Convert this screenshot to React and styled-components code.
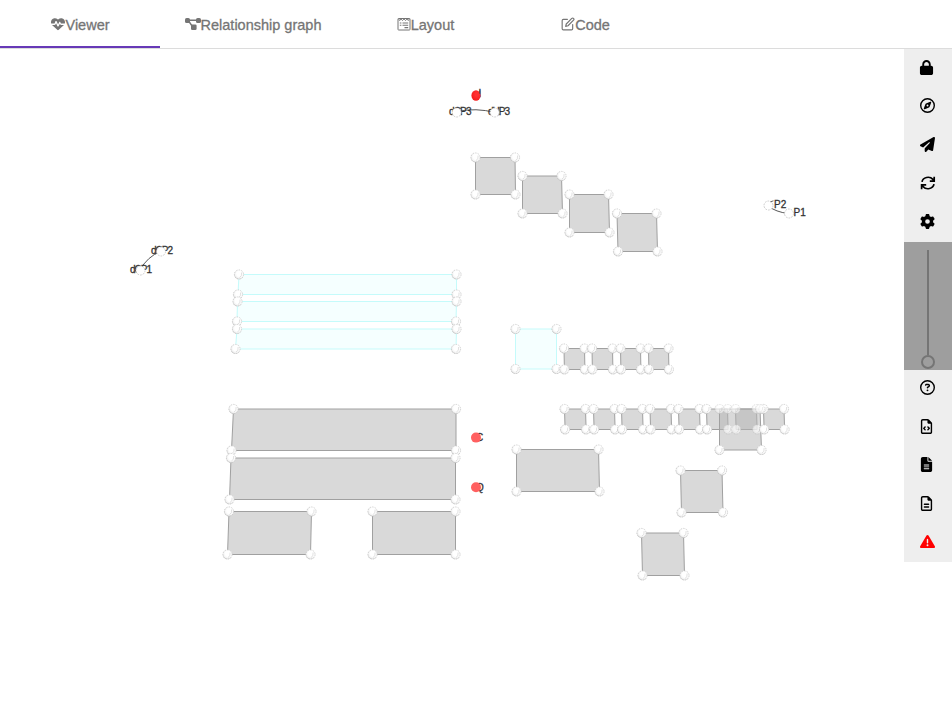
import React from "react";
import styled, { createGlobalStyle, css } from "styled-components";
import {
  FaHeartPulse, FaLock, FaRegCompass, FaPaperPlane, FaGear,
  FaRegCircleQuestion, FaRegFileCode, FaFileLines, FaRegFileLines, FaTriangleExclamation,
} from "react-icons/fa6";
import { FiEdit } from "react-icons/fi";

const GlobalStyle = createGlobalStyle`
  * { box-sizing: border-box; }
  body { margin: 0; background: #fff; overflow: hidden; }
`;

const Page = styled.div`
  display: flex;
  flex-direction: column;
  width: 952px;
  height: 720px;
  font-family: "Liberation Sans", Arial, sans-serif;
`;

const TabBar = styled.nav`
  display: flex;
  height: 49px;
  border-bottom: 1px solid #dcdcdc;
`;

const Tab = styled.button`
  display: flex;
  align-items: center;
  justify-content: center;
  width: ${(p) => p.$width}px;
  height: 48px;
  padding: 4px 0 0 1px;
  border: 0;
  border-bottom: 2px solid ${(p) => (p.$active ? "#673ab7" : "transparent")};
  background: none;
  color: #757575;
  font: 14.5px "Liberation Sans", Arial, sans-serif;
  -webkit-text-stroke: 0.3px #757575;
  white-space: nowrap;
`;

const TabIcon = styled.span`
  display: flex;
  margin-top: -3px;
  -webkit-text-stroke: 0;
`;

const Workspace = styled.main`
  display: flex;
  align-items: flex-start;
  flex: 1;
`;

const Scene = styled.svg`
  display: block;
  width: 904px;
  height: 671px;
`;

const Label = styled.text`
  font: 10px "Liberation Sans", Arial, sans-serif;
  fill: #333;
  stroke: #333;
  stroke-width: 0.3px;
`;

const Toolbar = styled.aside`
  display: flex;
  flex-direction: column;
  width: 48px;
  height: 513px;
  background: #eee;
`;

const ToolButton = styled.button`
  display: flex;
  flex: 1;
  align-items: center;
  justify-content: center;
  padding: 0 1px 2px 0;
  border: 0;
  background: none;
  color: #000;
  font-size: 15px;
  ${(p) => p.$alert && css`color: #f00;`}
  ${(p) => p.$narrow && css`padding-right: 4px;`}
  ${(p) => p.$lock && css`padding-right: 3px;`}
`;

const ZoomSlider = styled.div`
  display: flex;
  flex-direction: column;
  align-items: center;
  height: 128px;
  padding-top: 8px;
  background: #9e9e9e;
`;

const Track = styled.div`
  width: 2px;
  height: 105px;
  background: #757575;
`;

const Thumb = styled.div`
  width: 14px;
  height: 14px;
  border: 2px solid #757575;
  border-radius: 50%;
`;

const LayoutIcon = () => (
  <svg width="14" height="14" viewBox="0 0 14 14" fill="none" stroke="currentColor">
    <rect x="1" y="1.5" width="12" height="11.5" rx="0.6" />
    <path d="M1.5 1.7l1.2 1.9L4 1.9l1.5 1.7L7 1.9l1.5 1.7L10 1.9l1.3 1.7 1.2-1.9" strokeWidth="0.9" />
    <path d="M2.8 6h1.6M2.8 8.2h1.6M5.5 6H11.2M5.5 8.2H11.2M7.5 10.6H11.2" strokeWidth="1.1" />
  </svg>
);

const GraphIcon = () => (
  <svg width="16" height="14" viewBox="0 0 16 14" fill="currentColor">
    <rect x="0" y="1" width="5" height="5" rx="1.6" />
    <rect x="11" y="1" width="5" height="5" rx="1.6" />
    <rect x="6" y="7.5" width="5.6" height="5.6" rx="1.3" />
    <path d="M4 3.2h8M4 4.5l3.4 5" fill="none" stroke="currentColor" strokeWidth="1.4" />
  </svg>
);

const RefreshIcon = () => (
  <svg width="16" height="16" viewBox="0 0 16 16" fill="none" stroke="currentColor" strokeWidth="1.7">
    <path d="M2 6.8A6.1 5.3 0 0 1 12.9 4.4L14 5.7M14.2 1.8v4.4H9.8M14 9.2A6.1 5.3 0 0 1 3.1 11.6L2 10.3M1.6 14.2V9.8h4.6" />
  </svg>
);

const TABS = [
  { name: "Viewer", width: 160, icon: <FaHeartPulse size={14} />, active: true },
  { name: "Relationship graph", width: 185, icon: <GraphIcon /> },
  { name: "Layout", width: 160, icon: <LayoutIcon /> },
  { name: "Code", width: 160, icon: <FiEdit size={14} /> },
];

/* Corners run clockwise from the top left. */
const CYAN_PANELS = [
  [239, 274.5, 456.5, 274.5, 456.5, 294.5, 238, 294.5],
  [237.5, 301.5, 456.5, 301.5, 456, 321.5, 237, 321.5],
  [237, 329, 456.5, 329, 456, 349, 235.5, 349],
  [515.5, 329, 556.5, 329, 556.5, 369, 515.5, 369],
];

const row = (xs, top, bottom, slant) =>
  xs.map(([l, r]) => [l, top, r, top, r + slant, bottom, l + slant, bottom]);

const PANELS = [
  [475.5, 157.5, 515, 157.5, 515.5, 194.5, 475.5, 194.5],
  [522.5, 176, 561.5, 176, 562.5, 213.5, 522.5, 213.5],
  [569.5, 194.5, 608.5, 194.5, 609.5, 232.5, 569.5, 232.5],
  [617, 213.5, 656.5, 213.5, 657.5, 251.5, 618, 251.5],
  [233.5, 409, 456, 409, 456, 450.5, 231.5, 450.5],
  [231, 458, 455.5, 458, 455.5, 499.5, 229.5, 499.5],
  [229, 511.5, 311.5, 511.5, 310.5, 554.5, 227.5, 554.5],
  [372.5, 511.5, 455.5, 511.5, 455.5, 554.5, 372.5, 554.5],
  [516.5, 449.5, 598.5, 449.5, 599.5, 491.5, 516.5, 491.5],
  [680.5, 470.5, 722, 470.5, 723, 512.5, 681.5, 512.5],
  [641.5, 533, 683.5, 533, 684.5, 575.5, 642.5, 575.5],
  ...row([[564, 584.5], [592, 612.5], [620.5, 640.5], [648.5, 668.5]], 348.5, 369.5, 0.4),
  ...row([[564.5, 585.5], [593.5, 614.5], [621.5, 642.5], [650, 671], [678.5, 699.5], [706.5, 727.5], [735.5, 756.5], [763.5, 784]], 409, 429.5, 0.6),
  [719.5, 409, 760, 409, 761.5, 450, 719.5, 450],
];

const toPoints = (c) => `${c[0]},${c[1]} ${c[2]},${c[3]} ${c[4]},${c[5]} ${c[6]},${c[7]}`;
const corners = (c) => [0, 2, 4, 6].map((i) => [c[i], c[i + 1]]);

/* A white ball with a soft broken rim and a faint facet down its lit side. */
const Sphere = ({ x, y, translucent }) => (
  <g opacity={translucent ? 0.65 : 1}>
    <circle cx={x} cy={y} r="4.8" fill="url(#sphere)" />
    <circle cx={x} cy={y} r="4.6" fill="none" stroke="#b5b5b5" strokeWidth="0.7" strokeDasharray="1.4 1.2" strokeOpacity="0.75" />
    <path d={`M${x + 0.4} ${y + 3}Q${x + 3.2} ${y + 2} ${x + 2.6} ${y - 2}`} fill="none" stroke="#dedede" strokeWidth="0.9" />
  </g>
);

const CrateScene = () => (
  <Scene viewBox="0 49 904 671">
    <defs>
      <radialGradient id="sphere" cx="0.55" cy="0.42" r="0.58">
        <stop offset="0.5" stopColor="#fff" />
        <stop offset="0.8" stopColor="#f3f3f3" />
        <stop offset="1" stopColor="#d2d2d2" />
      </radialGradient>
      <radialGradient id="red" cx="0.6" cy="0.4" r="0.6">
        <stop offset="0.3" stopColor="#ff3030" />
        <stop offset="1" stopColor="#f51c1c" />
      </radialGradient>
    </defs>

    <g fill="none" stroke="#444" strokeWidth="0.9">
      <path d="M457 111.5Q476 107.5 495 112.5" />
      <path d="M140 270Q147 257 161 251" />
      <path d="M768 206Q776 212 788 213.5" />
    </g>

    <Label x="449" y="114.7" textLength="22.5">dCP3</Label>
    <Label x="488" y="114.7" textLength="22">dHP3</Label>
    <Label x="151" y="254.3" textLength="22">dCP2</Label>
    <Label x="130" y="273.3" textLength="22">dCP1</Label>
    <Label x="774" y="208.3">P2</Label>
    <Label x="793.5" y="215.7">P1</Label>
    <Label x="478.5" y="96.5">I</Label>
    <Label x="476" y="441">C</Label>
    <Label x="476" y="491">Q</Label>

    {CYAN_PANELS.map((c, i) => (
      <polygon key={i} points={toPoints(c)} fill="#f5ffff" stroke="#c5fbfb" />
    ))}
    {PANELS.map((c, i) => (
      <polygon key={i} points={toPoints(c)} fill="#b3b3b3" fillOpacity="0.5" stroke="#a0a0a0" />
    ))}
    {[...CYAN_PANELS, ...PANELS].flatMap(corners).map(([x, y], i) => (
      <Sphere key={i} x={x} y={y} translucent={x > 717 && x < 762 && y < 435} />
    ))}

    {[[456.7, 112.5], [494.7, 112.5], [161, 251.5], [140.5, 270.5], [768.5, 205.5], [789, 213.5]].map(([x, y]) => (
      <circle key={x} cx={x} cy={y} r="4.5" fill="#fff" stroke="#b8b8b8" strokeWidth="0.7" strokeDasharray="1.8 1" />
    ))}
    <path d="M770.5 201.8l3-1" stroke="#555" strokeWidth="0.9" />
    <ellipse cx="476" cy="95.5" rx="4.6" ry="5.2" fill="url(#red)" />
    <path d="M479.8 90.3v3.4" stroke="#444" strokeWidth="1" />
    <circle cx="476" cy="437.6" r="5" fill="#ff6060" />
    <circle cx="476" cy="487.2" r="5" fill="#ff6060" />
  </Scene>
);

export default function App() {
  return (
    <>
      <GlobalStyle />
      <Page>
        <TabBar>
          {TABS.map((t) => (
            <Tab key={t.name} $active={t.active} $width={t.width}>
              <TabIcon>{t.icon}</TabIcon>
              {t.name}
            </Tab>
          ))}
        </TabBar>
        <Workspace>
          <CrateScene />
          <Toolbar>
            <ToolButton $lock><FaLock /></ToolButton>
            <ToolButton><FaRegCompass /></ToolButton>
            <ToolButton><FaPaperPlane /></ToolButton>
            <ToolButton><RefreshIcon /></ToolButton>
            <ToolButton><FaGear /></ToolButton>
            <ZoomSlider>
              <Track />
              <Thumb />
            </ZoomSlider>
            <ToolButton><FaRegCircleQuestion /></ToolButton>
            <ToolButton $narrow><FaRegFileCode /></ToolButton>
            <ToolButton $narrow><FaFileLines /></ToolButton>
            <ToolButton $narrow><FaRegFileLines /></ToolButton>
            <ToolButton $alert><FaTriangleExclamation /></ToolButton>
          </Toolbar>
        </Workspace>
      </Page>
    </>
  );
}
